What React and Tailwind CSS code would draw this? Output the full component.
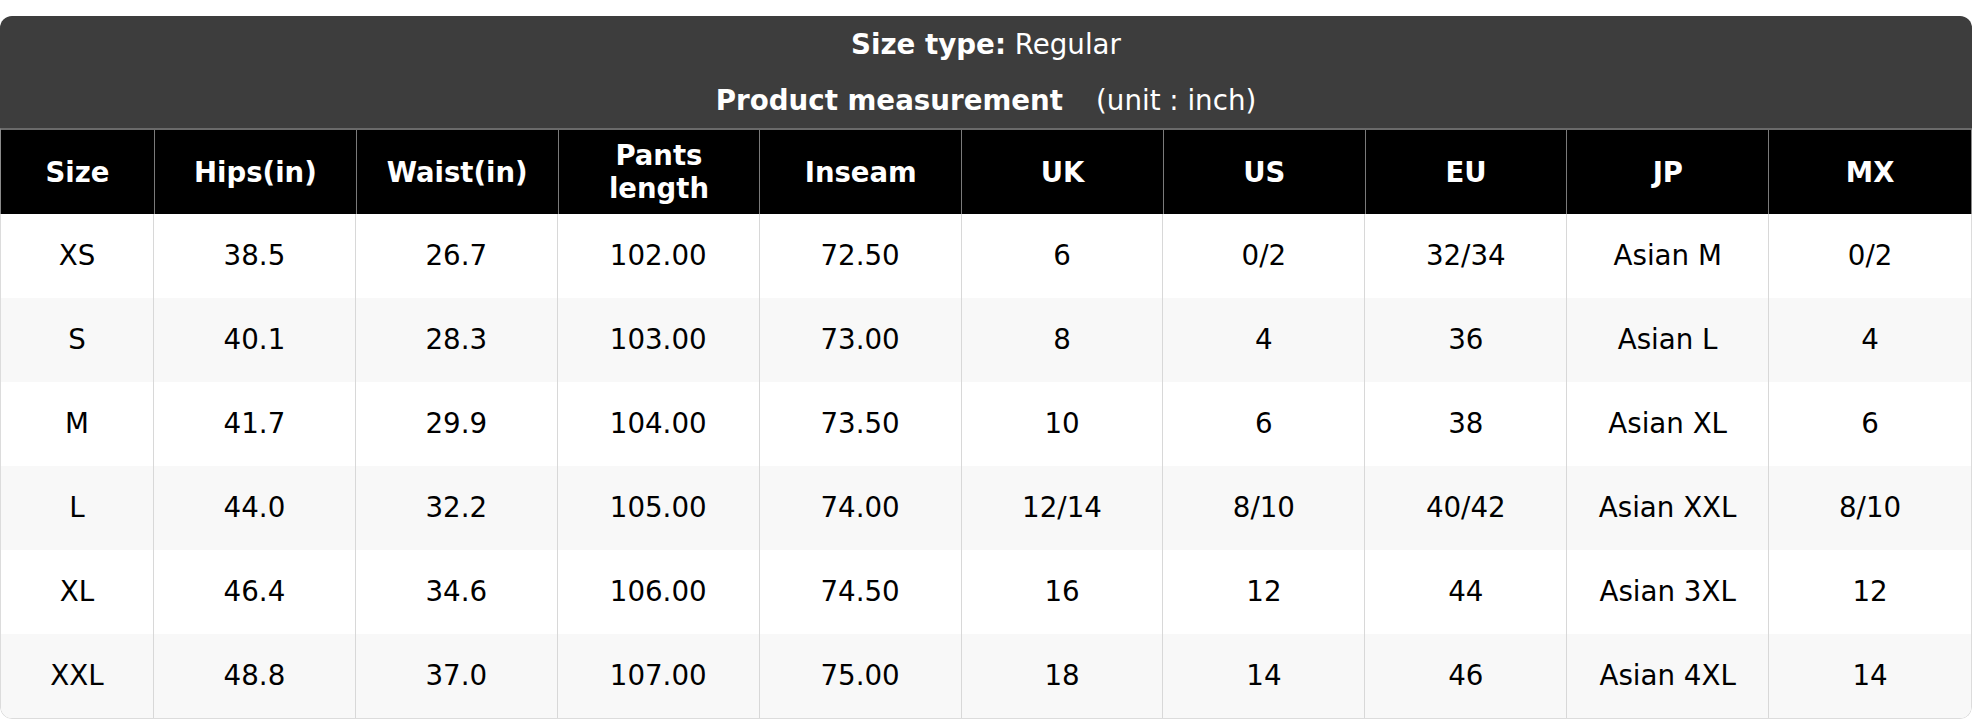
import React from "react";

const headers = ["Size", "Hips(in)", "Waist(in)", "Pants length", "Inseam", "UK", "US", "EU", "JP", "MX"];
const rows = [
  ["XS", "38.5", "26.7", "102.00", "72.50", "6", "0/2", "32/34", "Asian M", "0/2"],
  ["S", "40.1", "28.3", "103.00", "73.00", "8", "4", "36", "Asian L", "4"],
  ["M", "41.7", "29.9", "104.00", "73.50", "10", "6", "38", "Asian XL", "6"],
  ["L", "44.0", "32.2", "105.00", "74.00", "12/14", "8/10", "40/42", "Asian XXL", "8/10"],
  ["XL", "46.4", "34.6", "106.00", "74.50", "16", "12", "44", "Asian 3XL", "12"],
  ["XXL", "48.8", "37.0", "107.00", "75.00", "18", "14", "46", "Asian 4XL", "14"],
];

export default function App() {
  return (
    <div className="bg-white pt-[16px] w-[1972px] font-['DejaVu_Sans',sans-serif]">
      <div className="rounded-[12px] overflow-hidden">
        <div className="bg-[#3d3d3d] text-white text-[27.7px]">
          <div className="h-[56px] flex items-center justify-center leading-[33px]">
            <span className="font-bold">Size type:</span>
            <span>&nbsp;Regular</span>
          </div>
          <div className="h-[56px] flex items-center justify-center leading-[33px]">
            <span className="font-bold">Product measurement</span>
            <span className="ml-[33px]">(unit : inch)</span>
          </div>
        </div>
        <div className="grid grid-cols-[154px_repeat(9,minmax(0,1fr))] bg-black text-white border-t-2 border-t-[#6a6a6a] border-x border-x-[#8a8a8a]">
          {headers.map((h, i) => (
            <div
              key={h}
              className={
                "h-[84px] flex items-center justify-center text-center font-bold text-[27.5px] leading-[1.2] px-2 " +
                (i < headers.length - 1 ? "border-r border-r-[#7a7a7a]" : "")
              }
            >
              {h === "Pants length" ? (
                <span>
                  Pants
                  <br />
                  length
                </span>
              ) : (
                h
              )}
            </div>
          ))}
        </div>
        <div className="border-x border-b border-[#dcdcdc] rounded-b-[12px] overflow-hidden">
          {rows.map((r, ri) => (
            <div
              key={r[0]}
              className={
                "grid grid-cols-[153px_repeat(9,minmax(0,1fr))] " + (ri % 2 === 1 ? "bg-[#f8f8f8]" : "bg-white")
              }
            >
              {r.map((c, ci) => (
                <div
                  key={ci}
                  className={
                    "h-[84px] flex items-center justify-center text-[27.7px] text-black " +
                    (ci < r.length - 1 ? "border-r border-r-[#d8d8d8]" : "")
                  }
                >
                  {c}
                </div>
              ))}
            </div>
          ))}
        </div>
      </div>
    </div>
  );
}
